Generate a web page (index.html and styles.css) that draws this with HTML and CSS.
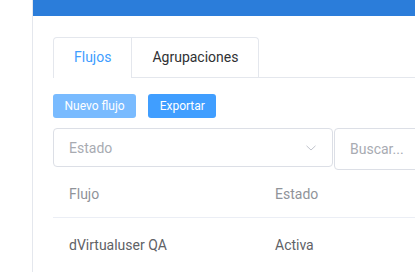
FILE: index.html
```html
<!DOCTYPE html>
<html lang="es">

<head>
  <meta charset="UTF-8">
  <meta name="viewport" content="width=device-width, initial-scale=1.0">
  <title>Flujos</title>
  <link rel="stylesheet" href="styles.css">
</head>

<body>
  <aside class="sidebar"></aside>
  <main class="main">
    <div class="topbar"></div>
    <section class="content">
      <div class="tabs-header">
        <div class="tabs-nav">
          <div class="tab-item active">Flujos</div>
          <div class="tab-item">Agrupaciones</div>
        </div>
      </div>

      <div class="actions">
        <button class="btn btn-disabled" type="button">Nuevo flujo</button>
        <button class="btn btn-primary" type="button">Exportar</button>
      </div>

      <div class="filters">
        <div class="select">
          <span class="placeholder">Estado</span>
          <svg class="chevron" width="10" height="6" viewBox="0 0 10 6">
            <path d="M0.5 0.8 L5 5 L9.5 0.8" fill="none" stroke="#c0c4cc" stroke-width="1"/>
          </svg>
        </div>
        <div class="search">
          <span class="placeholder">Buscar...</span>
        </div>
      </div>

      <div class="table">
        <div class="table-row table-head">
          <div class="cell col-flujo">Flujo</div>
          <div class="cell col-estado">Estado</div>
        </div>
        <div class="table-row">
          <div class="cell col-flujo">dVirtualuser QA</div>
          <div class="cell col-estado">Activa</div>
        </div>
      </div>
    </section>
  </main>
</body>

</html>
```

FILE: styles.css
```css
* {
  margin: 0;
  padding: 0;
  box-sizing: border-box;
  font-family: 'Roboto', 'Liberation Sans', sans-serif;
}

html,
body {
  width: 100%;
  height: 100%;
  overflow: hidden;
}

body {
  display: flex;
  background: #fff;
}

.sidebar {
  width: 33px;
  flex-shrink: 0;
  border-right: 1px solid #e4e7ed;
}

.main {
  flex: 1;
  min-width: 0;
  overflow: hidden;
}

.topbar {
  height: 16px;
  background-color: #2b7dda;
}

.content {
  width: 640px;
  padding: 21px 20px;
}

.tabs-header {
  display: flex;
  border-bottom: 1px solid #e4e7ed;
  margin-bottom: 16px;
}

.tabs-nav {
  display: flex;
  border: 1px solid #e4e7ed;
  border-bottom: 0;
  border-radius: 4px 4px 0 0;
  margin-bottom: -1px;
}

.tab-item {
  height: 40px;
  line-height: 39px;
  padding: 0 20px;
  font-size: 14px;
  color: #303133;
  border-bottom: 1px solid #e4e7ed;
}

.tab-item + .tab-item {
  border-left: 1px solid #e4e7ed;
}

.tab-item.active {
  color: #409eff;
  border-bottom-color: #fff;
}

.actions {
  display: flex;
  gap: 12px;
  margin-bottom: 10px;
}

.btn {
  height: 24px;
  padding: 0 11.5px;
  font-size: 12px;
  color: #fff;
  border: 0;
  border-radius: 3px;
}

.btn-primary {
  background-color: #409eff;
}

.btn-disabled {
  background-color: #79bbff;
}

.filters {
  display: flex;
  align-items: flex-start;
  gap: 1px;
}

.select,
.search {
  display: flex;
  align-items: center;
  border: 1px solid #dcdfe6;
  border-radius: 4px;
  padding: 0 15px;
  font-size: 14px;
}

.select {
  width: 280px;
  height: 39px;
  justify-content: space-between;
}

.search {
  width: 240px;
  height: 42px;
}

.placeholder {
  color: #a8abb2;
}

.chevron {
  margin-right: 1px;
}

.table {
  font-size: 14px;
}

.table-row {
  display: flex;
  border-bottom: 1px solid #ebeef5;
  height: 48px;
  align-items: center;
  color: #606266;
}

.table-row + .table-row {
  height: 55px;
}

.table-head {
  color: #909399;
}

.cell {
  padding: 0 16px;
}

.col-flujo {
  width: 206px;
}

.col-estado {
  width: 200px;
}
```
